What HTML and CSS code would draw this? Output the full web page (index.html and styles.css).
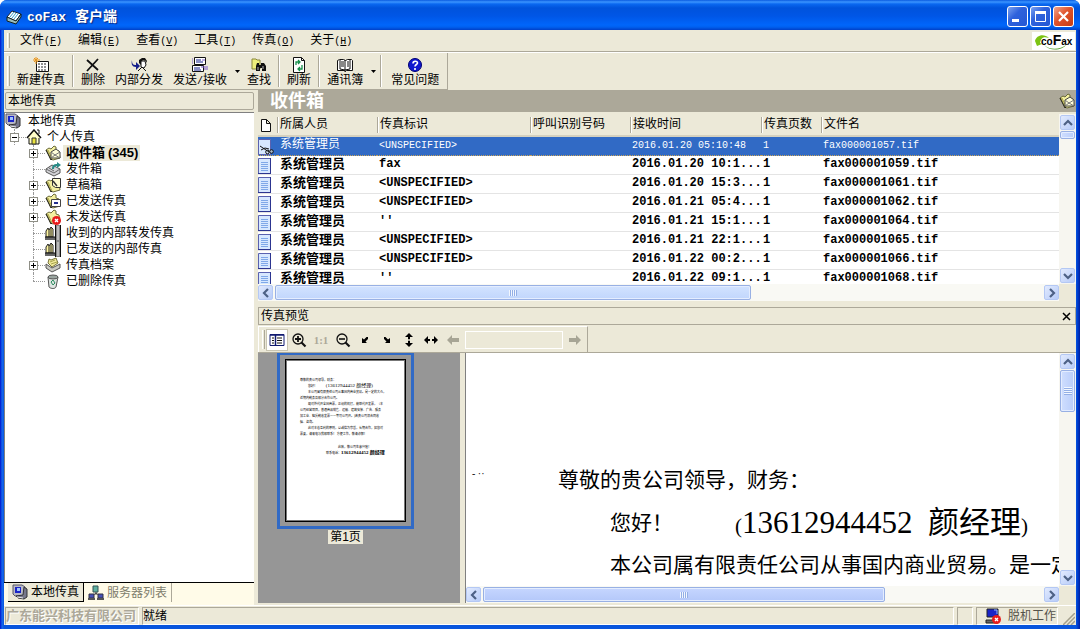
FILE: index.html
```html
<!DOCTYPE html>
<html lang="zh-CN">
<head>
<meta charset="utf-8">
<title>coFax 客户端</title>
<link rel="stylesheet" href="styles.css">
</head>
<body>
<svg class="defs" aria-hidden="true">
  <symbol id="folder" viewBox="0 0 16 16">
    <path d="M1 5l3-2 2 1 3-3 2 1v3l3 1 1 7-7 2-2-1z" fill="#f4f0a0" stroke="#6b6a3a"/>
    <path d="M2 5l4 10M3 5l4 9" stroke="#a9a44c" fill="none"/>
    <path d="M1 5l5 10 1-1" stroke="#222" fill="none"/>
  </symbol>
  <symbol id="inbox" viewBox="0 0 16 16">
    <use href="#folder"/>
    <path d="M6 7l5-3 4 3v6H6z" fill="#fffdd8" stroke="#444"/>
    <path d="M6 7l4 3 5-3M6 13l4-3 5 3" fill="none" stroke="#777"/>
  </symbol>
  <symbol id="computer" viewBox="0 0 16 16">
    <path d="M1 1h9l3 2v8l-3 1H3L1 10z" fill="#b9b9c6" stroke="#555568"/>
    <path d="M3 3h6v6H3z" fill="#1a24c8"/><path d="M5 4h3v3H5z" fill="#9fc4ff"/>
    <path d="M12 3l3 2v8l-3 2-6-1-2-2 7-1z" fill="#77778a" stroke="#333"/>
    <path d="M5 13l6 1" stroke="#eee"/>
  </symbol>
  <symbol id="books" viewBox="0 0 16 16">
    <path d="M10 0h6v16h-6z" fill="#888"/><path d="M12 1h2v14h-2z" fill="#bbb"/><path d="M10.500 0v16M15.500 0v16" stroke="#111"/>
    <path d="M1 6l2-3 1 2 2-3 2 2v8H1z" fill="#fff6a0" stroke="#222"/><path d="M4 5v7M6 3v9" stroke="#222"/>
    <path d="M0 12h10v3H0z" fill="#666"/><path d="M0 12h10" stroke="#111"/>
  </symbol>
  <symbol id="page" viewBox="0 0 13 16">
    <path d="M.5.5h12v15H.5z" fill="#d7e8ff" stroke="#5a62b0"/><path d="M12.500 0v16M0 15.500h13" stroke="#2c3590"/>
    <path d="M3 4.500h7M3 6.500h7M3 8.500h7M3 10.500h7M3 12.500h7" stroke="#7fa8e8"/>
  </symbol>
  <symbol id="chev" viewBox="0 0 10 10"><path d="M1 7l4-4 4 4" fill="none" stroke="#4d6185" stroke-width="2.200"/></symbol>
  <symbol id="caret" viewBox="0 0 5 3"><path d="M0 0h5L2.500 3z" fill="#000"/></symbol>
  <symbol id="arrow" viewBox="0 0 14 12"><path d="M1 6l5-5v3h7v4H6v3z" fill="#a7a595"/></symbol>
  <symbol id="diag" viewBox="0 0 8 8"><path d="M1 2v5h5L4.500 5.500 7 3V1H5.500L3 3.500z"/></symbol>
</svg>

<div class="window">
  <header class="titlebar">
    <svg class="i16" viewBox="0 0 16 16"><path d="M1 8l5-6 9 3-5 7z" fill="#fff" stroke="#123"/><path d="M1 8v4l9 3 5-7V5l-5 7z" fill="#9bb" stroke="#122"/><path d="M4 8l4-5M6 9l4-5M8 10l4-5" stroke="#38a0c8"/></svg>
    <h1><span class="mono">coFax</span> 客户端</h1>
    <button class="winbtn" aria-label="最小化"><svg viewBox="0 0 19 19"><path d="M4 12h7v3H4z" fill="#fff"/></svg></button>
    <button class="winbtn" aria-label="最大化"><svg viewBox="0 0 19 19"><path d="M4.500 5.500h10v9h-10zM4 5h11" fill="none" stroke="#fff"/><path d="M4 4h11v3H4z" fill="#fff"/></svg></button>
    <button class="winbtn close" aria-label="关闭"><svg viewBox="0 0 19 19"><path d="M5 5l9 9M14 5l-9 9" stroke="#fff" stroke-width="2.200"/></svg></button>
  </header>

  <div class="client">
    <nav class="menubar">
      <i class="grip"></i>
      <button>文件<span class="mono">(<u>F</u>)</span></button>
      <button>编辑<span class="mono">(<u>E</u>)</span></button>
      <button>查看<span class="mono">(<u>V</u>)</span></button>
      <button>工具<span class="mono">(<u>T</u>)</span></button>
      <button>传真<span class="mono">(<u>O</u>)</span></button>
      <button>关于<span class="mono">(<u>H</u>)</span></button>
      <svg class="logo" viewBox="0 0 43 18" role="img" aria-label="coFax"><path d="M3 9c1-6 9-8 14-3-6-2-8 0-9 5l2 1-5 2-2-5z" fill="#7cc312"/><path d="M12 13c7 6 17 4 22 0-3 5-16 7-22 0z" fill="#4b9c22"/><text x="9" y="13">co<tspan class="logo-f">F</tspan>ax</text></svg>
    </nav>

    <div class="toolrow">
      <div class="toolbar">
        <i class="grip"></i>
        <button class="tool"><svg class="i16" viewBox="0 0 16 16"><path d="M3.500 4.500h12v10h-12z" fill="#fff" stroke="#111"/><path d="M5 7h9M5 10h9M5 13h9" stroke="#222" stroke-dasharray="2 1"/><path d="M3 0v7M0 3h7M1 1l4 4M5 1L1 5" stroke="#e8941a"/></svg>新建传真</button>
        <i class="sep"></i>
        <button class="tool"><svg class="i16" viewBox="0 0 16 16"><path d="M2 3l11 10M13 2L2 14" stroke="#111" stroke-width="1.800"/></svg>删除</button>
        <button class="tool"><svg class="i16" viewBox="0 0 16 16"><path d="M8 3l3-2h3l2 3-1 2V4l-3-1-2 2v3l-2-2z" fill="#111"/><path d="M10 4l4 0 1 4-2 3-3-1z" fill="#fff" stroke="#111"/><path d="M7 14l4-4 4 4" fill="none" stroke="#111"/><path d="M1 3c0 4 1 5 4 5V5l4 4-4 4v-3C1 10 0 7 1 3z" fill="#15208c"/></svg>内部分发</button>
        <button class="tool"><svg class="i16" viewBox="0 0 16 16"><path d="M2.500.5h11v7h-11z" fill="#fff" stroke="#111"/><path d="M.5 8.500h11v6H.5z" fill="#fff" stroke="#111"/><path d="M4 3h5M4 5h7M2 11h6M2 13h7" stroke="#15208c"/><path d="M10 3h3M9 10h7M12 12h4M0 1v6" stroke="#7a5acb"/></svg><span>发送<span class="mono">/</span>接收</span></button>
        <button class="drop" aria-label="发送选项"><svg viewBox="0 0 5 3"><use href="#caret"/></svg></button>
        <button class="tool"><svg class="i16" viewBox="0 0 16 16"><path d="M1 2h4l1 1h3v9H1z" fill="#eef07c" stroke="#88863a"/><path d="M5 14V9l1-3h2v2h2V6h3l2 3v5h-4v-3H9v3z" fill="#111"/><path d="M7 10v3M12 9v3" stroke="#bbb"/></svg>查找</button>
        <i class="sep"></i>
        <button class="tool"><svg class="i16" viewBox="0 0 16 16"><path d="M2.500.5h8l3 3v12h-11z" fill="#fff" stroke="#111"/><path d="M10.500.5v3h3" fill="none" stroke="#111"/><path d="M5 8V5h4M7 3l2 2-2 2M11 8v4H7M9 10l-2 2 2 2" fill="none" stroke="#16904a" stroke-width="1.300"/></svg>刷新</button>
        <i class="sep"></i>
        <button class="tool"><svg class="i16" viewBox="0 0 16 16"><path d="M.5 3.500l2-1h4l2 1 2-1h4l1 1v10h-6l-1 1-1-1h-7z" fill="#fff" stroke="#111"/><path d="M8 3v12M3 3v9l5 1 5-1V3" stroke="#111" fill="none"/><path d="M4 5h3M4 7h3M4 9h3M10 5h2M10 7h2M10 9h2" stroke="#111"/></svg>通讯簿</button>
        <button class="drop" aria-label="通讯簿选项"><svg viewBox="0 0 5 3"><use href="#caret"/></svg></button>
        <i class="sep"></i>
        <button class="tool faq"><svg class="i16" viewBox="0 0 16 16"><circle cx="8" cy="8" r="6.500" fill="#1018d0" stroke="#000070"/><path d="M6 6.500c0-3 4.500-3 4.500-.5C10.500 7.500 8 7.500 8 9.500M8 11v2" fill="none" stroke="#fff" stroke-width="1.600"/></svg>常见问题</button>
      </div>
    </div>

    <div class="main">
      <aside class="side">
        <h2 class="caption">本地传真</h2>
        <div class="tree">
          <div class="node root"><svg class="i16"><use href="#computer"/></svg><span>本地传真</span></div>
          <ul class="level1">
            <li><div class="node"><i class="joint"></i><button class="exp minus" aria-label="折叠"></button><svg class="i16" viewBox="0 0 16 16"><path d="M3 8h10v7H3z" fill="#fffdc8" stroke="#111"/><path d="M1 9l7-8 7 8" fill="#fffdc8" stroke="#111" stroke-width="1.500"/><path d="M11 1h2v4" stroke="#111" fill="none"/><path d="M6 9h4v6H6z" fill="#e9e33c" stroke="#333"/></svg><span>个人传真</span></div>
              <ul class="level2">
                <li class="node"><i class="joint"></i><button class="exp" aria-label="展开"></button><svg class="i16"><use href="#inbox"/></svg><span class="current">收件箱<b>(345)</b></span></li>
                <li class="node"><i class="joint"></i><svg class="i16" viewBox="0 0 16 16"><path d="M1 8l6-4 8 4v4l-6 3-8-4z" fill="#d4d4d8" stroke="#555"/><path d="M1 8l8 4 6-4M4 7l5 3" fill="none" stroke="#666"/><path d="M7 8c0-4 2-5 5-5V1l4 3-4 3V5c-2 0-3 1-3 3z" fill="#2a8b87"/></svg><span>发件箱</span></li>
                <li class="node"><i class="joint"></i><button class="exp" aria-label="展开"></button><svg class="i16" viewBox="0 0 16 16"><use href="#folder"/><path d="M7.500 1.500h8v9h-5l-3-2z" fill="#fffdd0" stroke="#333"/><path d="M8 4l4 5" stroke="#333" stroke-width="1.500"/></svg><span>草稿箱</span></li>
                <li class="node"><i class="joint"></i><button class="exp" aria-label="展开"></button><svg class="i16" viewBox="0 0 16 16"><use href="#folder"/><path d="M6.500 6.500h9v7h-9z" fill="#fff" stroke="#444"/><path d="M9 10h4" stroke="#23308f" stroke-width="2"/></svg><span>已发送传真</span></li>
                <li class="node"><i class="joint"></i><button class="exp" aria-label="展开"></button><svg class="i16" viewBox="0 0 16 16"><use href="#folder"/><circle cx="11.500" cy="11.500" r="4.500" fill="#e81c1c"/><path d="M10 10l3 3M13 10l-3 3" stroke="#fff" stroke-width="1.400"/></svg><span>未发送传真</span></li>
                <li class="node"><i class="joint"></i><svg class="i16"><use href="#books"/></svg><span>收到的内部转发传真</span></li>
                <li class="node"><i class="joint"></i><svg class="i16"><use href="#books"/></svg><span>已发送的内部传真</span></li>
                <li class="node"><i class="joint"></i><button class="exp" aria-label="展开"></button><svg class="i16" viewBox="0 0 16 16"><path d="M1 7l6 4 8-4v4l-8 4-6-4z" fill="#c9c9c2" stroke="#555"/><path d="M3 6l1-4 2 1 5-2 2 5-6 4z" fill="#efe99a" stroke="#77743a"/><path d="M5 5l5-2M6 7l6-2" stroke="#a8a34c"/></svg><span>传真档案</span></li>
                <li class="node last"><i class="joint"></i><svg class="i16" viewBox="0 0 16 16"><path d="M3 4l1 10c2 2 6 2 7 0l2-10z" fill="#dfe5e2" stroke="#555"/><ellipse cx="8" cy="4" rx="5" ry="2" fill="#9aa5a0" stroke="#555"/><path d="M6 9l2-2 2 3-2 2z" fill="none" stroke="#2a8b5e"/></svg><span>已删除传真</span></li>
              </ul>
            </li>
          </ul>
        </div>
        <div class="tabs">
          <button class="tab active"><svg class="i16"><use href="#computer"/></svg>本地传真</button>
          <button class="tab"><svg class="i16" viewBox="0 0 16 16"><path d="M8 6v4M4 11l4-3 4 3" stroke="#444" fill="none"/><path d="M5 1h5v6H5z" fill="#5fb0a0" stroke="#355"/><path d="M1 9h5v4H1zM10 9h5v4h-5z" fill="#4650b8" stroke="#334"/><path d="M0 14h7M9 14h7" stroke="#555" stroke-width="2"/></svg>服务器列表</button>
        </div>
      </aside>

      <section class="content">
        <div class="band"><h2>收件箱</h2><svg class="i16"><use href="#inbox"/></svg></div>
        <div class="list">
          <div class="listview">
            <table>
              <colgroup><col class="c-icon"><col class="c-owner"><col class="c-id"><col class="c-caller"><col class="c-time"><col class="c-pages"><col></colgroup>
              <thead><tr><th><svg class="doc" viewBox="0 0 10 13"><path d="M.5.5h5l4 4v8h-9zM5.500.5v4h4" fill="#fff" stroke="#111"/></svg></th><th>所属人员</th><th>传真标识</th><th>呼叫识别号码</th><th>接收时间</th><th>传真页数</th><th>文件名</th></tr></thead>
              <tbody>
                <tr class="selected"><td><svg class="pg" viewBox="0 0 16 16"><path d="M.5.500h12v15H.5z" fill="#d7e8ff" stroke="#5a62b0"/><path d="M2 7l9 6M3 11l4-2 4 1" stroke="#111" fill="none"/><circle cx="9.500" cy="13" r="1.800" fill="none" stroke="#111"/><circle cx="13.500" cy="12.500" r="1.800" fill="#abc" stroke="#111"/></svg></td><td>系统管理员</td><td class="mono">&lt;UNSPECIFIED&gt;</td><td></td><td class="mono">2016.01.20 05:10:48</td><td class="mono">1</td><td class="mono">fax000001057.tif</td></tr>
                <tr><td><svg class="pg"><use href="#page" width="13"/></svg></td><td>系统管理员</td><td class="mono">fax</td><td></td><td class="mono">2016.01.20 10:1...</td><td class="mono">1</td><td class="mono">fax000001059.tif</td></tr>
                <tr><td><svg class="pg"><use href="#page" width="13"/></svg></td><td>系统管理员</td><td class="mono">&lt;UNSPECIFIED&gt;</td><td></td><td class="mono">2016.01.20 15:3...</td><td class="mono">1</td><td class="mono">fax000001061.tif</td></tr>
                <tr><td><svg class="pg"><use href="#page" width="13"/></svg></td><td>系统管理员</td><td class="mono">&lt;UNSPECIFIED&gt;</td><td></td><td class="mono">2016.01.21 05:4...</td><td class="mono">1</td><td class="mono">fax000001062.tif</td></tr>
                <tr><td><svg class="pg"><use href="#page" width="13"/></svg></td><td>系统管理员</td><td class="mono">''</td><td></td><td class="mono">2016.01.21 15:1...</td><td class="mono">1</td><td class="mono">fax000001064.tif</td></tr>
                <tr><td><svg class="pg"><use href="#page" width="13"/></svg></td><td>系统管理员</td><td class="mono">&lt;UNSPECIFIED&gt;</td><td></td><td class="mono">2016.01.21 22:1...</td><td class="mono">1</td><td class="mono">fax000001065.tif</td></tr>
                <tr><td><svg class="pg"><use href="#page" width="13"/></svg></td><td>系统管理员</td><td class="mono">&lt;UNSPECIFIED&gt;</td><td></td><td class="mono">2016.01.22 00:2...</td><td class="mono">1</td><td class="mono">fax000001066.tif</td></tr>
                <tr><td><svg class="pg"><use href="#page" width="13"/></svg></td><td>系统管理员</td><td class="mono">''</td><td></td><td class="mono">2016.01.22 09:1...</td><td class="mono">1</td><td class="mono">fax000001068.tif</td></tr>
              </tbody>
            </table>
          </div>
          <div class="vbar"><button class="sb" aria-label="向上"><svg><use href="#chev"/></svg></button><div class="track"><div class="thumb tiny"></div></div><button class="sb down" aria-label="向下"><svg><use href="#chev"/></svg></button></div>
          <div class="hbar"><button class="sb left" aria-label="向左"><svg><use href="#chev"/></svg></button><div class="track"><div class="thumb wide"><i></i></div></div><button class="sb right" aria-label="向右"><svg><use href="#chev"/></svg></button></div>
        </div>

        <div class="caption preview-cap"><h2>传真预览</h2><button class="x" aria-label="关闭预览"><svg viewBox="0 0 9 9"><path d="M1 1l7 7M8 1L1 8" stroke="#000" stroke-width="1.500"/></svg></button></div>
        <div class="ptools">
          <div class="ptoolbar">
            <i class="grip"></i>
            <button class="pt pressed" aria-label="缩略图"><svg class="i16" viewBox="0 0 16 16"><path d="M1 2.500h14v11H1z" fill="#fff" stroke="#101a70"/><path d="M1 3h14M6.500 3v10" stroke="#101a70" stroke-width="1.500"/><path d="M3 6h2M3 8.500h2M3 11h2M8 6h5M8 8.500h5M8 11h5" stroke="#111"/></svg></button>
            <button class="pt" aria-label="放大"><svg class="i16" viewBox="0 0 16 16"><circle cx="7" cy="7" r="5" fill="none" stroke="#111" stroke-width="1.300"/><path d="M4 7h6M7 4v6" stroke="#111" stroke-width="1.800"/><path d="M10.500 10.500l4 4" stroke="#111" stroke-width="2.200"/></svg></button>
            <button class="pt ratio" disabled>1:1</button>
            <button class="pt" aria-label="缩小"><svg class="i16" viewBox="0 0 16 16"><circle cx="7" cy="7" r="5" fill="none" stroke="#111" stroke-width="1.300"/><path d="M4 7h6" stroke="#111" stroke-width="1.600"/><path d="M10.500 10.500l4 4" stroke="#111" stroke-width="2.200"/></svg></button>
            <button class="pt" aria-label="左下"><svg class="i8"><use href="#diag"/></svg></button>
            <button class="pt" aria-label="右下"><svg class="i8 flip"><use href="#diag"/></svg></button>
            <button class="pt" aria-label="适合高度"><svg class="i16" viewBox="0 0 16 16"><path d="M8 1l4 4H9v6h3l-4 4-4-4h3V5H4z"/><path d="M6 8h4" stroke="#ece9d8" stroke-width="1.500"/></svg></button>
            <button class="pt" aria-label="适合宽度"><svg class="i16" viewBox="0 0 16 16"><path d="M1 8l4-4v3h6V4l4 4-4 4V9H5v3z"/><path d="M8 6v4" stroke="#ece9d8" stroke-width="2"/></svg></button>
            <button class="pt" disabled aria-label="上一页"><svg class="arrow"><use href="#arrow"/></svg></button>
            <input class="pageno" aria-label="页码" disabled>
            <button class="pt" disabled aria-label="下一页"><svg class="arrow flip"><use href="#arrow"/></svg></button>
          </div>
        </div>
        <div class="preview">
          <div class="thumbs">
            <figure>
              <div class="frame"><div class="mini">
                <p>尊敬的贵公司领导，财务：</p>
                <p class="in2">您好！ <span class="mid">(13612944452 颜经理)</span></p>
                <p class="in2">本公司属有限责任公司从事国内商业贸易。是一定的大众，</p>
                <p>近期内税务及部分合作公司。</p>
                <p class="in2">现对外代开全国商票，正规的机打，能够代开发票，（本</p>
                <p>公司经营项目，普通商品销售、运输、建筑安装、广告、服务</p>
                <p>加工业、租赁税收发票一一等可公司开。)若贵公司须合同收</p>
                <p>据、咨询。</p>
                <p class="in2">此对本着互利的原则，以诚信为宗旨，长期合作，如您对</p>
                <p>票要，请来电与我部联系！ 方便工作，敬请谅解！</p>
                <p class="sign">此致，敬公司生意兴隆！</p>
                <p class="tel">联系电话：<b>13612944452 颜经理</b></p>
              </div></div>
              <figcaption>第1页</figcaption>
            </figure>
          </div>
          <div class="pane">
            <div class="paper">
              <p class="speck">- ··</p>
              <div class="letter">
                <p>尊敬的贵公司领导，财务：</p>
                <p class="indent phone"><span class="hello">您好！</span><span>(<big>13612944452&ensp;颜经理</big>)</span></p>
                <p class="indent">本公司属有限责任公司从事国内商业贸易。是一定</p>
              </div>
            </div>
            <div class="vbar"><button class="sb" aria-label="向上"><svg><use href="#chev"/></svg></button><div class="track"><div class="thumb short"><i></i></div></div><button class="sb down" aria-label="向下"><svg><use href="#chev"/></svg></button></div>
            <div class="hbar dark"><button class="sb left" aria-label="向左"><svg><use href="#chev"/></svg></button><div class="track"><div class="thumb mid-w"><i></i></div></div><button class="sb right" aria-label="向右"><svg><use href="#chev"/></svg></button></div>
          </div>
        </div>
      </section>
    </div>

    <footer class="status">
      <span class="cell company">广东能兴科技有限公司</span>
      <span class="cell grow">就绪</span>
      <span class="cell blank"></span>
      <span class="cell offline"><svg class="i16" viewBox="0 0 16 16"><path d="M2 1h11v8H2z" fill="#1a24c8" stroke="#222"/><path d="M9 2h3v4" stroke="#8fb4ff" fill="none"/><path d="M1 12h12v3H1z" fill="#666" stroke="#222"/><circle cx="11.500" cy="11.500" r="4.500" fill="#e81c1c"/><path d="M10 10l3 3M13 10l-3 3" stroke="#fff" stroke-width="1.400"/></svg>脱机工作</span>
      <svg class="sizer" viewBox="0 0 12 12"><path d="M0 12L12 0M4 12l8-8M8 12l4-4" stroke="#a39f8b" stroke-width="1.500"/></svg>
    </footer>
  </div>
</div>
</body>
</html>
```
FILE: styles.css
```css
* { box-sizing: border-box; }
body, h1, h2, p, ul, figure { margin: 0; padding: 0; }
body {
  height: 100vh;
  overflow: hidden;
  font: 12px/16px "Liberation Sans", "Noto Sans CJK SC", sans-serif;
  color: #000;
  background: #fff;
}
button { font: inherit; color: inherit; background: none; border: 0; padding: 0; margin: 0; white-space: nowrap; }
svg { display: block; flex: none; }
ul { list-style: none; }
.defs { position: absolute; width: 0; height: 0; }
.i16 { width: 16px; height: 16px; }
.mono { font-family: "Liberation Mono", "Noto Sans CJK SC", monospace; font-size: 10px; }

/* window frame */
.window {
  height: 100vh;
  display: flex;
  flex-direction: column;
  border-radius: 7px 7px 0 0;
  overflow: hidden;
  background: linear-gradient(90deg, #0019cf 0, #0831d9 1px, #166aee 2px, #0855dd 4px, #0855dd calc(100% - 4px), #0046d8 calc(100% - 3px), #001ea0 100%);
  padding: 0 4px 4px;
}
.titlebar {
  flex: none;
  height: 30px;
  margin: 0 -4px;
  padding: 3px 6px 0;
  display: flex;
  align-items: center;
  gap: 2px;
  background: linear-gradient(#0a5be0 0, #3b95ff 2px, #0a68f0 4px, #0053dc 8px, #0056e6 16px, #0066fb 25px, #0060f0 27px, #0040c8 30px);
}
.titlebar h1 {
  flex: 1;
  margin-left: 3px;
  font-size: 14px;
  line-height: 20px;
  color: #fff;
  text-shadow: 1px 1px 1px #0a2a80;
}
.titlebar .mono { margin-right: 5px; font-size: 13px; }
.winbtn {
  width: 21px;
  height: 21px;
  border: 1px solid #fff;
  border-radius: 3px;
  background: linear-gradient(135deg, #7ba2f0, #2f62dc 40%, #2457d4);
}
.winbtn.close { background: linear-gradient(135deg, #f0a58e, #e0532c 45%, #c63c12); }

.client { flex: 1; min-height: 0; display: flex; flex-direction: column; background: #ece9d8; }
.grip { flex: none; width: 3px; margin: 3px 0 3px 3px; border-left: 1px solid #fff; border-right: 1px solid #aca899; }

.menubar { flex: none; height: 22px; display: flex; border-bottom: 1px solid #aca899; }
.menubar button { padding: 0 8px; }
.menubar .grip { margin-right: 2px; }
.logo { width: 43px; height: 18px; margin: 2px 1px 0 auto; background: #fff; font: bold 10px "Liberation Sans", sans-serif; }
.logo-f { font-size: 14px; }

.toolrow { flex: none; height: 38px; display: flex; border-top: 1px solid #fff; }
.toolbar { display: flex; padding-right: 3px; border-right: 1px solid #aca899; border-bottom: 1px solid #aca899; }
.toolbar .grip { margin-right: 2px; }
.tool { display: flex; flex-direction: column; align-items: center; padding: 4px 5px 0; line-height: 15px; }
.sep { width: 2px; margin: 2px; border-left: 1px solid #aca899; border-right: 1px solid #fff; }
.drop { width: 10px; display: flex; align-items: center; justify-content: center; }
.drop svg { width: 5px; height: 3px; }
.faq { padding-left: 7px; }

.main { flex: 1; min-height: 0; display: flex; gap: 4px; }

/* left side */
.side { flex: none; width: 250px; display: flex; flex-direction: column; }
.caption {
  flex: none;
  height: 18px;
  margin: 2px 0 2px 1px;
  padding-left: 2px;
  border: 1px solid #aca899;
  border-radius: 2px;
  font-size: 12px;
  font-weight: normal;
  line-height: 16px;
}
.tree { flex: 1; background: #fff; border: 1px solid #808080; border-width: 1px 0 0 1px; }
.node { position: relative; height: 16px; display: flex; align-items: center; white-space: nowrap; }
.node span { margin-left: 5px; }
.root span { margin-left: 7px; }
.level1 { padding-left: 4px; }
.level2 { padding-left: 19px; }
.joint { width: 17px; height: 16px; }
.joint::before { content: ""; position: absolute; left: 5px; top: 0; height: 16px; border-left: 1px dotted #999; }
.joint::after { content: ""; position: absolute; left: 5px; top: 8px; width: 12px; border-top: 1px dotted #999; }
.last .joint::before { height: 8px; }
.exp {
  position: absolute;
  left: 1px;
  top: 4px;
  width: 9px;
  height: 9px;
  border: 1px solid #8f8f86;
  background: linear-gradient(#000, #000) center / 5px 1px no-repeat, linear-gradient(#000, #000) center / 1px 5px no-repeat, #fff;
}
.exp.minus { background: linear-gradient(#000, #000) center / 5px 1px no-repeat, #fff; }
.node .current { margin-left: 2px; padding: 0 2px 0 3px; font-size: 13px; font-weight: bold; background: #ece9d8; }
.current b { margin-left: 3px; }

.tabs { flex: none; height: 23px; display: flex; background: #fffbe8; border-top: 1px solid #000; padding: 0 0 3px 4px; }
.tab { display: flex; align-items: center; gap: 3px; padding: 0 4px; color: #807d6c; border-right: 1px solid #aca899; }
.tab.active { color: #000; background: #ece9d8; border-right: 1px solid #000; border-bottom: 1px solid #000; }

/* right side */
.content { flex: 1; min-width: 0; display: flex; flex-direction: column; }
.band { flex: none; height: 22px; display: flex; align-items: center; justify-content: space-between; padding: 0 1px 0 12px; background: #aca899; color: #fff; }
.band h2 { font-size: 18px; line-height: 20px; }
.list { flex: none; height: 189px; display: grid; grid-template: 172px 17px / 1fr 17px; }
.listview { min-width: 0; overflow: hidden; background: #fff; }
table { width: 100%; table-layout: fixed; border-collapse: separate; border-spacing: 0; font-size: 13px; font-weight: bold; }
.c-icon { width: 19px; }
.c-owner, .c-caller { width: 100px; }
.c-id { width: 153px; }
.c-time { width: 131px; }
.c-pages { width: 60px; }
th { height: 25px; padding: 0 0 0 3px; text-align: left; font-size: 12px; font-weight: normal; background: linear-gradient(90deg, #aca899 1px, #fff 1px) 0 5px / 2px 16px no-repeat, #ece9d8; border-bottom: 2px solid #d5d1bf; white-space: nowrap; }
th:first-child { background: #ece9d8; }
.doc { width: 10px; height: 13px; margin-top: 4px; }
td { height: 19px; padding: 0 0 3px 3px; line-height: 15px; white-space: nowrap; border-bottom: 1px solid #e4e4e4; }
td:first-child { padding: 1px 0 0; }
td.mono { padding: 0 0 1px 2px; font-size: 12px; }
.pg { width: 16px; height: 16px; }
.selected td { background: #316ac5; color: #fff; border-bottom: 1px dotted #c9a45a; font-weight: normal; font-size: 12px; }
.selected td.mono { font-size: 10px; }

/* scroll bars */
.vbar { display: flex; flex-direction: column; background: #f7f6f0; padding: 1px; }
.list .vbar { margin-top: 2px; }
.hbar { display: flex; background: #f9f9f4; padding: 1px 0; }
.track { flex: 1; padding: 1px; }
.vbar .track { padding: 1px 0; }
.hbar .track { padding: 0 2px; }
.sb {
  flex: none;
  width: 15px;
  height: 15px;
  display: flex;
  align-items: center;
  justify-content: center;
  border: 1px solid #b4c8f4;
  border-radius: 2px;
  background: linear-gradient(135deg, #e1eafe, #b8ccf8);
}
.sb svg { width: 10px; height: 10px; }
.down svg { transform: rotate(180deg); }
.left svg { transform: rotate(-90deg); }
.right svg { transform: rotate(90deg); }
.thumb { display: flex; align-items: center; justify-content: center; border: 1px solid #98b0e4; border-radius: 2px; background: #cadbfd; box-shadow: inset 0 0 0 1px #e4edff; }
.vbar .thumb { width: 15px; background: linear-gradient(90deg, #cfdefe, #b9cdfa); }
.hbar .thumb { height: 15px; background: linear-gradient(#d2e3ff, #c1d6fc); }
.hbar.dark .thumb { background: linear-gradient(#c6d6ff, #b4c8f9); }
.thumb i { width: 8px; height: 6px; background: repeating-linear-gradient(90deg, #f2f7ff 0 1px, #93afe6 1px 2px); }
.vbar .thumb i { height: 8px; background: repeating-linear-gradient(#f2f7ff 0 1px, #93afe6 1px 2px); }
.tiny { height: 8px; }
.short { height: 42px; }
.wide { width: 62%; }
.mid-w { width: 72%; }

/* preview */
.preview-cap { margin: 6px 0 1px; padding-right: 4px; display: flex; align-items: center; justify-content: space-between; border-radius: 0; }
.preview-cap h2 { font-size: 12px; font-weight: normal; line-height: 15px; }
.x svg { width: 9px; height: 9px; }
.ptools { flex: none; height: 27px; display: flex; border-bottom: 1px solid #aca899; }
.ptoolbar { display: flex; align-items: center; padding-right: 1px; border: 1px solid #fff; border-right-color: #aca899; border-bottom: 0; }
.ptoolbar .grip { align-self: stretch; margin-right: 1px; }
.pt { width: 22px; height: 22px; display: flex; align-items: center; justify-content: center; }
.pressed { background: #fff; border: 1px solid #c9c5b2; }
.ratio { color: #aca899; font: bold 11px "Liberation Serif", serif; }
.i8 { width: 8px; height: 8px; }
.arrow { width: 14px; height: 12px; }
.flip { transform: scaleX(-1); }
.pageno { width: 98px; height: 18px; margin: 0 1px; border: 1px solid #fff; background: #ece9d8; }

.preview { flex: 1; min-height: 0; display: flex; gap: 5px; padding-bottom: 2px; }
.thumbs { flex: none; width: 202px; padding-left: 19px; background: #969696; }
figure { width: 137px; display: flex; flex-direction: column; align-items: center; }
.frame { width: 100%; padding: 4px 5px; border: 3px solid #316ac5; border-top-width: 2px; }
.mini { height: 163px; padding: 17px 0 0 14px; border: 1px solid #000; background: #fff; font: 3px/6px "Liberation Serif", "Noto Sans CJK SC", serif; box-shadow: inset 0 0 0 1px #777; white-space: nowrap; }
.mini p { height: 6px; }
.mini .in2 { padding-left: 8px; }
.mid { margin-left: 8px; font-size: 5px; }
.mini .sign { height: 13px; padding: 7px 0 0 38px; }
.mini .tel { padding-left: 26px; }
.mini b { font-size: 5px; }
figcaption { background: #ece9d8; line-height: 14px; padding: 0 2px; margin-top: 1px; }
.pane { flex: 1; min-width: 0; display: grid; grid-template: 1fr 17px / 1fr 17px; border-left: 1px solid #808080; background: #ece9d8; }
.paper { min-width: 0; display: flex; overflow: hidden; background: #fff; padding-top: 111px; font-family: "Liberation Serif", "Noto Sans CJK SC", serif; white-space: nowrap; }
.speck { flex: none; width: 92px; padding-left: 6px; font-size: 10px; line-height: 20px; }
.letter { font-size: 21px; line-height: 32px; }
.indent { padding-left: 52px; }
.phone { display: flex; align-items: center; height: 53px; }
.hello { width: 125px; }
.phone big { font-size: 31px; line-height: 40px; }

/* status bar */
.status { flex: none; height: 20px; display: flex; gap: 3px; padding: 1px 1px 0; border-top: 1px solid #fff; }
.cell { display: flex; align-items: center; padding: 0 2px 0 0; border: 1px solid #aca899; border-right-color: #fff; border-bottom-color: #fff; white-space: nowrap; }
.company { color: #aca899; font-size: 13px; font-weight: bold; text-shadow: 1px 1px 0 #fff; }
.grow { flex: 1; }
.blank { width: 16px; }
.offline { width: 82px; gap: 7px; padding-left: 8px; color: #55534a; }
.sizer { width: 12px; height: 12px; align-self: flex-end; margin-left: 2px; }
```
